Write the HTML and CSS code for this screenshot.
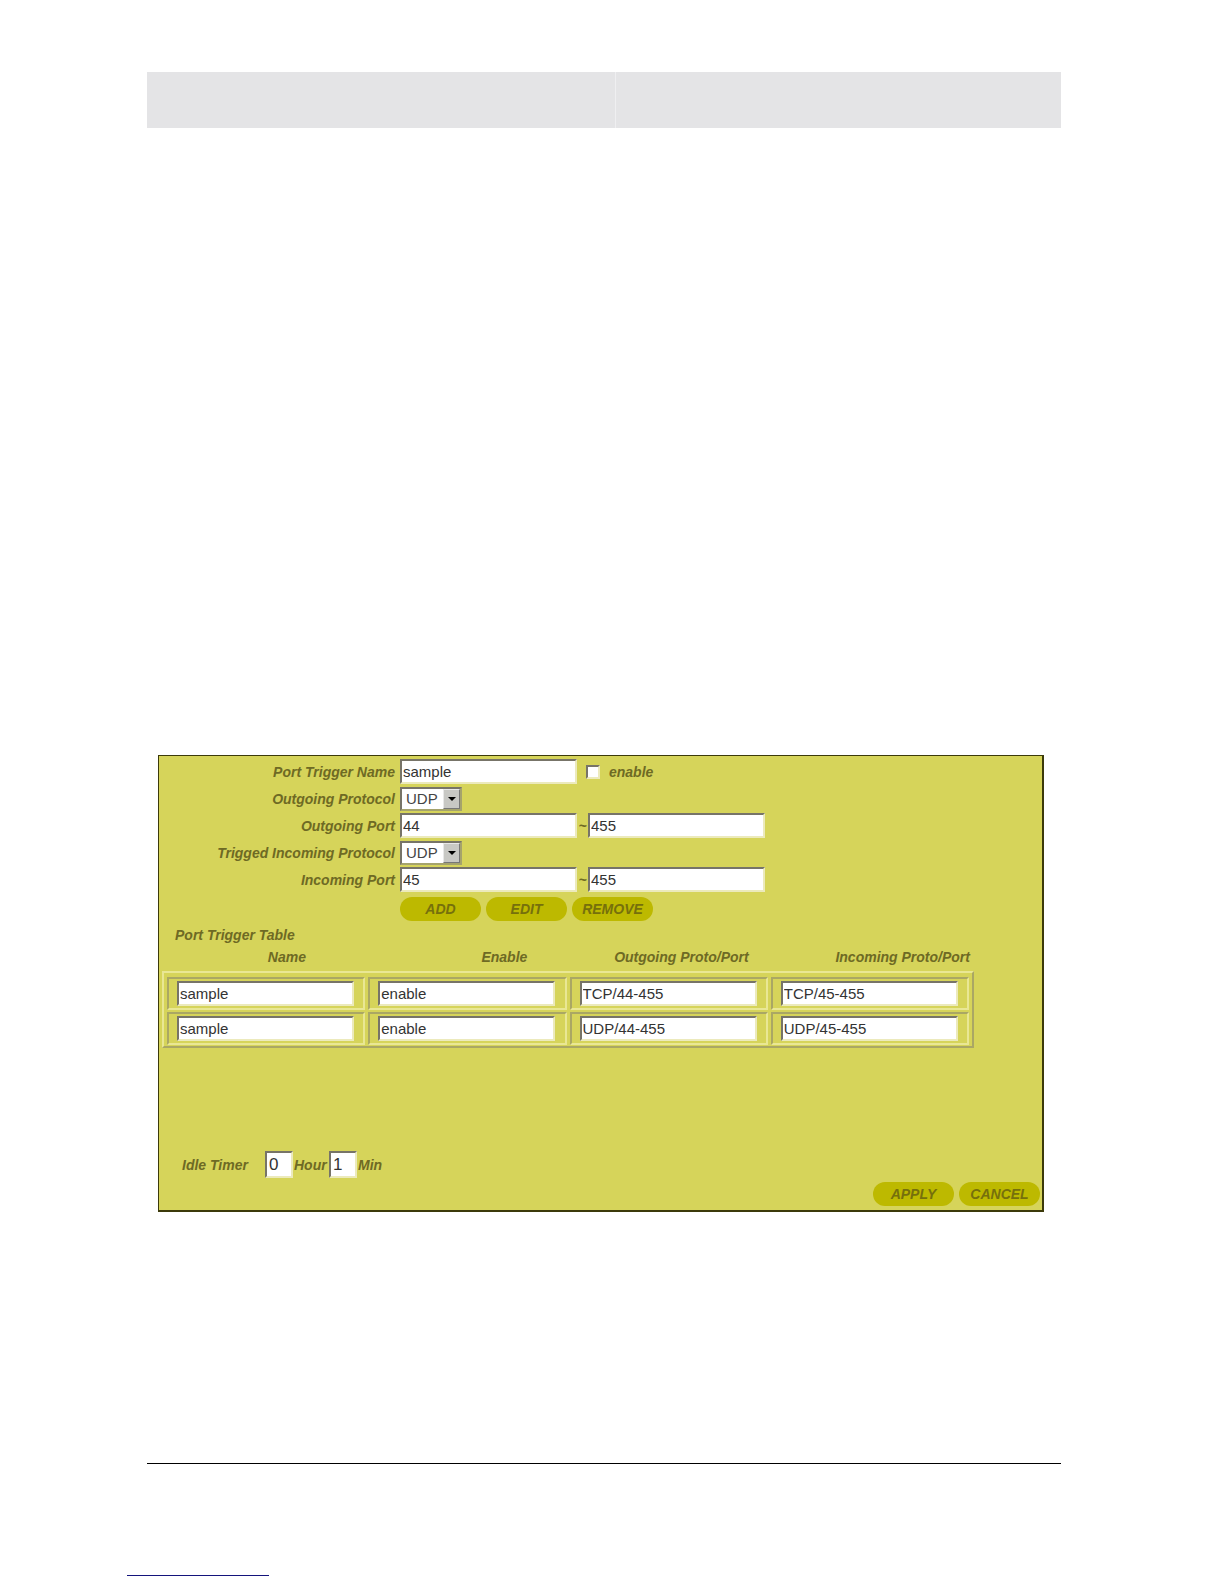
FILE: index.html
```html
<!DOCTYPE html>
<html lang="en">
<head>
<meta charset="UTF-8">
<meta name="viewport" content="width=device-width, initial-scale=1.0">
<title>Port Trigger</title>
<link rel="stylesheet" href="styles.css">
</head>
<body>
<div class="page">
  <header class="page-header">
    <div class="header-left"></div>
    <div class="header-right"></div>
  </header>

  <form class="panel">
    <div class="fields">
      <label for="triggerName">Port Trigger Name</label>
      <div class="field">
        <input type="text" id="triggerName" value="sample">
        <input type="checkbox" id="triggerEnable">
        <label for="triggerEnable">enable</label>
      </div>
      <label for="outProtocol">Outgoing Protocol</label>
      <div class="field">
        <div class="select">
          <select id="outProtocol">
            <option>UDP</option>
            <option>TCP</option>
          </select>
          <span class="arrow"><svg width="8" height="4" viewBox="0 0 8 4"><path d="M0 0h8L4 4z"/></svg></span>
        </div>
      </div>
      <label for="outPortStart">Outgoing Port</label>
      <div class="field">
        <input type="text" id="outPortStart" value="44">
        <span class="tilde">~</span>
        <input type="text" aria-label="Outgoing Port end" value="455">
      </div>
      <label for="inProtocol">Trigged Incoming Protocol</label>
      <div class="field">
        <div class="select">
          <select id="inProtocol">
            <option>UDP</option>
            <option>TCP</option>
          </select>
          <span class="arrow"><svg width="8" height="4" viewBox="0 0 8 4"><path d="M0 0h8L4 4z"/></svg></span>
        </div>
      </div>
      <label for="inPortStart">Incoming Port</label>
      <div class="field">
        <input type="text" id="inPortStart" value="45">
        <span class="tilde">~</span>
        <input type="text" aria-label="Incoming Port end" value="455">
      </div>
    </div>
    <div class="buttons">
      <button type="button">ADD</button>
      <button type="button">EDIT</button>
      <button type="button">REMOVE</button>
    </div>

    <h2>Port Trigger Table</h2>
    <table>
      <thead>
        <tr>
          <th>Name</th>
          <th>Enable</th>
          <th>Outgoing Proto/Port</th>
          <th>Incoming Proto/Port</th>
        </tr>
      </thead>
      <tbody>
        <tr>
          <td><input type="text" aria-label="Name 1" value="sample"></td>
          <td><input type="text" aria-label="Enable 1" value="enable"></td>
          <td><input type="text" aria-label="Outgoing 1" value="TCP/44-455"></td>
          <td><input type="text" aria-label="Incoming 1" value="TCP/45-455"></td>
        </tr>
        <tr>
          <td><input type="text" aria-label="Name 2" value="sample"></td>
          <td><input type="text" aria-label="Enable 2" value="enable"></td>
          <td><input type="text" aria-label="Outgoing 2" value="UDP/44-455"></td>
          <td><input type="text" aria-label="Incoming 2" value="UDP/45-455"></td>
        </tr>
      </tbody>
    </table>

    <div class="timer">
      <span class="timer-title">Idle Timer</span>
      <input type="text" id="idleHour" value="0">
      <label for="idleHour">Hour</label>
      <input type="text" id="idleMin" value="1">
      <label for="idleMin">Min</label>
    </div>
    <div class="buttons buttons-end">
      <button type="button">APPLY</button>
      <button type="button">CANCEL</button>
    </div>
  </form>

  <footer class="page-footer"></footer>
</div>
<div class="link-line"></div>
</body>
</html>
```
FILE: styles.css
```css
* {
  box-sizing: border-box;
}
body {
  margin: 0;
  background-color: #fff;
  font-family: "Liberation Sans", Arial, sans-serif;
  font-size: 14px;
  line-height: 20px;
}
.page {
  padding: 72px 163px 0 147px;
}
.page-header {
  display: flex;
  height: 56px;
  background-color: #e4e4e6;
}
.header-left {
  flex: 469;
  border-right: 1px solid #efeff1;
}
.header-right {
  flex: 445;
}
.panel {
  margin: 627px 17px 0 11px;
  padding: 2px 2px 4px;
  border: 2px solid #3c3a0a;
  border-top-width: 1px;
  border-left-width: 1px;
  background-color: #d6d45a;
  color: #6e6a24;
  font-weight: bold;
  font-style: italic;
}
.fields {
  display: grid;
  grid-template-columns: 234px 1fr;
  grid-auto-rows: 27px;
  column-gap: 5px;
  align-items: center;
}
.fields > label {
  text-align: right;
}
.field {
  display: flex;
  align-items: center;
}
input[type="text"] {
  width: 177px;
  height: 25px;
  padding: 0 1px;
  border: 2px solid;
  border-color: #777468 #eceabc #eceabc #777468;
  background-color: #fff;
  color: #333;
  font: 15px "Liberation Sans", Arial, sans-serif;
}
input[type="checkbox"] {
  appearance: none;
  width: 14px;
  height: 14px;
  margin: 0 9px;
  border: 2px solid;
  border-color: #777468 #eceabc #eceabc #777468;
  background-color: #fff;
}
.tilde {
  width: 11px;
  text-align: center;
}
.select {
  position: relative;
  width: 62px;
  height: 24px;
}
select {
  appearance: none;
  width: 100%;
  height: 100%;
  padding: 0 4px;
  border: 2px solid;
  border-color: #777468 #a5a36c #a5a36c #777468;
  border-radius: 0;
  background-color: #fff;
  color: #444;
  font: 15px "Liberation Sans", Arial, sans-serif;
}
.arrow {
  position: absolute;
  top: 2px;
  right: 2px;
  bottom: 2px;
  width: 17px;
  display: flex;
  justify-content: center;
  align-items: center;
  border: 1px solid;
  border-color: #e8e8e8 #777 #777 #e8e8e8;
  background-color: #c8c8c4;
  pointer-events: none;
}
.buttons {
  display: flex;
  gap: 5px;
  padding: 4px 0 0 239px;
}
.buttons-end {
  justify-content: flex-end;
  padding-left: 0;
}
button {
  width: 81px;
  height: 24px;
  padding: 0;
  border: none;
  border-radius: 12px;
  background-color: #bdb900;
  color: #76700c;
  font: italic bold 14px "Liberation Sans", Arial, sans-serif;
}
h2 {
  margin: 4px 0 0 14px;
  font-size: 14px;
}
table {
  display: block;
  width: 812px;
  max-width: 100%;
  margin-left: 1px;
}
tr {
  display: contents;
}
thead {
  display: grid;
  grid-template-columns: 144px repeat(3, 1fr);
  padding: 2px 4px 4px 0;
}
th {
  padding: 0;
  text-align: right;
}
tbody {
  display: grid;
  grid-template-columns: repeat(4, 1fr);
  gap: 2px 3px;
  padding: 4px 3px 1px;
  border: 2px solid;
  border-color: #e9e794 #aaa764 #aaa764 #e9e794;
}
td {
  padding: 2px 8px;
  border: 2px solid;
  border-color: #aaa764 #e9e794 #e9e794 #aaa764;
}
td input[type="text"] {
  display: block;
  max-width: 100%;
}
.timer {
  display: flex;
  align-items: center;
  margin-top: 103px;
  padding-left: 21px;
}
.timer label {
  width: 36px;
  padding-left: 1px;
}
.timer-title {
  width: 83px;
}
.timer input[type="text"] {
  width: 28px;
  height: 27px;
  padding-left: 2px;
  font-size: 17px;
}
.page-footer {
  margin-top: 251px;
  border-top: 1px solid #000;
}
.link-line {
  width: 142px;
  margin: 111px 0 0 127px;
  border-top: 1px solid #14147c;
}
```
